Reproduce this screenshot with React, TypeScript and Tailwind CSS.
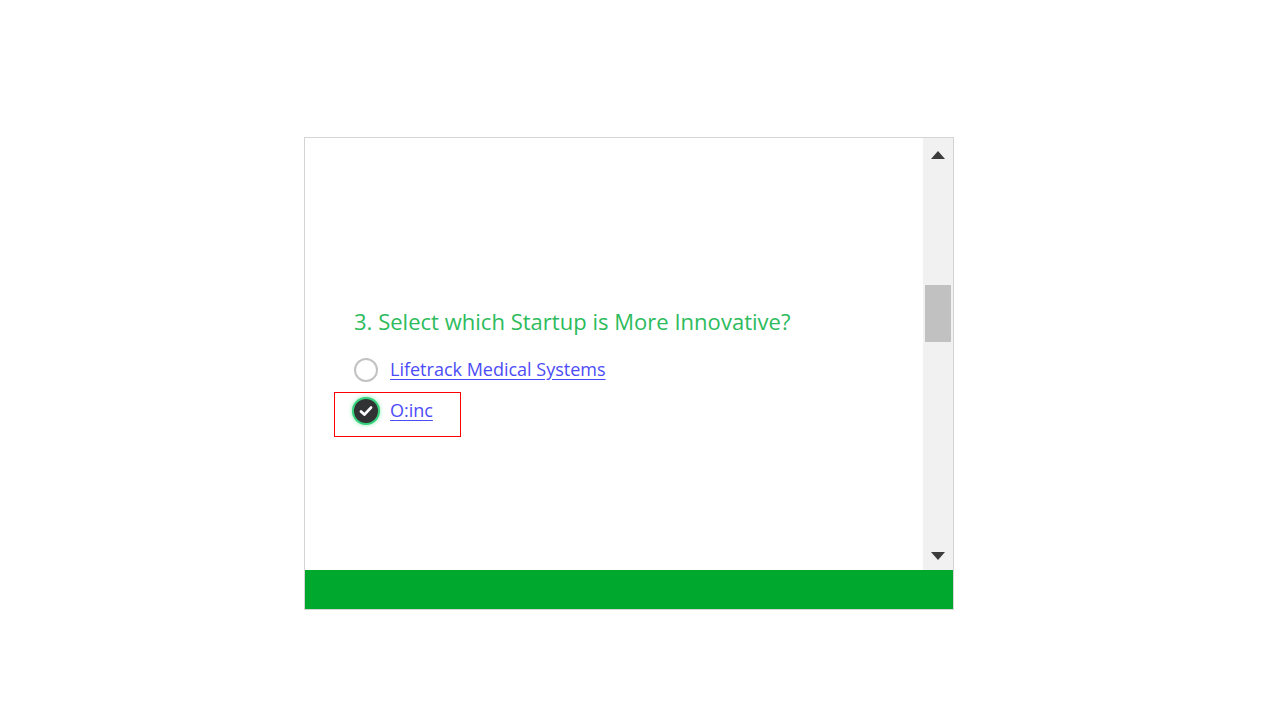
import React, { useState } from "react";

const options = ["Lifetrack Medical Systems", "O:inc"];

const Radio = ({ checked }: { checked: boolean }) =>
  checked ? (
    <span className="flex items-center justify-center w-[24px] h-[24px] rounded-full bg-[#303234] shadow-[0_0_0_2px_#34d17a,0_0_4px_2px_#8ee9b2]">
      <svg width="16" height="16" viewBox="0 0 16 16" fill="none">
        <path d="M3 8.4 6.4 11.6 13 4.6" stroke="white" strokeWidth="2.8" strokeLinecap="round" strokeLinejoin="round" />
      </svg>
    </span>
  ) : (
    <span className="block w-[24px] h-[24px] rounded-full border-2 border-[#c2c2c2] bg-white" />
  );

const App = () => {
  const [selected, setSelected] = useState(1);

  return (
    <div className="w-[1280px] h-[720px] bg-white pt-[137px] pl-[304px] font-['Open_Sans',sans-serif]">
      <div className="w-[650px] border border-[#d4d4d4]">
        <div className="flex h-[432px]">
          <div className="flex-1 pl-[49px] pt-[168px]">
            <h2 className="text-[22px] leading-[30px] text-[#2dbb5c] tracking-[0.02px]">3. Select which Startup is More Innovative?</h2>
            <div className="mt-[13px] flex flex-col">
              {options.map((opt, i) => (
                <div key={opt} className="flex items-center h-[41px] cursor-pointer relative" onClick={() => setSelected(i)}>
                  {selected === i && (
                    <div className="absolute left-[-20px] top-[2px] w-[127px] h-[45px] border border-[#ff0000]" />
                  )}
                  <Radio checked={selected === i} />
                  <a href="#" className="ml-[12px] text-[18px] text-[#4c4cf7] underline underline-offset-[3px]">
                    {opt}
                  </a>
                </div>
              ))}
            </div>
          </div>
          <div className="w-[30px] bg-[#f1f1f1] flex flex-col items-center relative">
            <svg className="mt-[13px]" width="14" height="8" viewBox="0 0 14 8">
              <path d="M0 8 7 0 14 8Z" fill="#3c3c3c" />
            </svg>
            <div className="absolute left-[2px] top-[147px] w-[26px] h-[57px] bg-[#c1c1c1]" />
            <div className="flex-1" />
            <svg className="mb-[10px]" width="14" height="8" viewBox="0 0 14 8">
              <path d="M0 0 7 8 14 0Z" fill="#3c3c3c" />
            </svg>
          </div>
        </div>
        <div className="h-[39px] bg-[#00a82e]" />
      </div>
    </div>
  );
};

export default App;
